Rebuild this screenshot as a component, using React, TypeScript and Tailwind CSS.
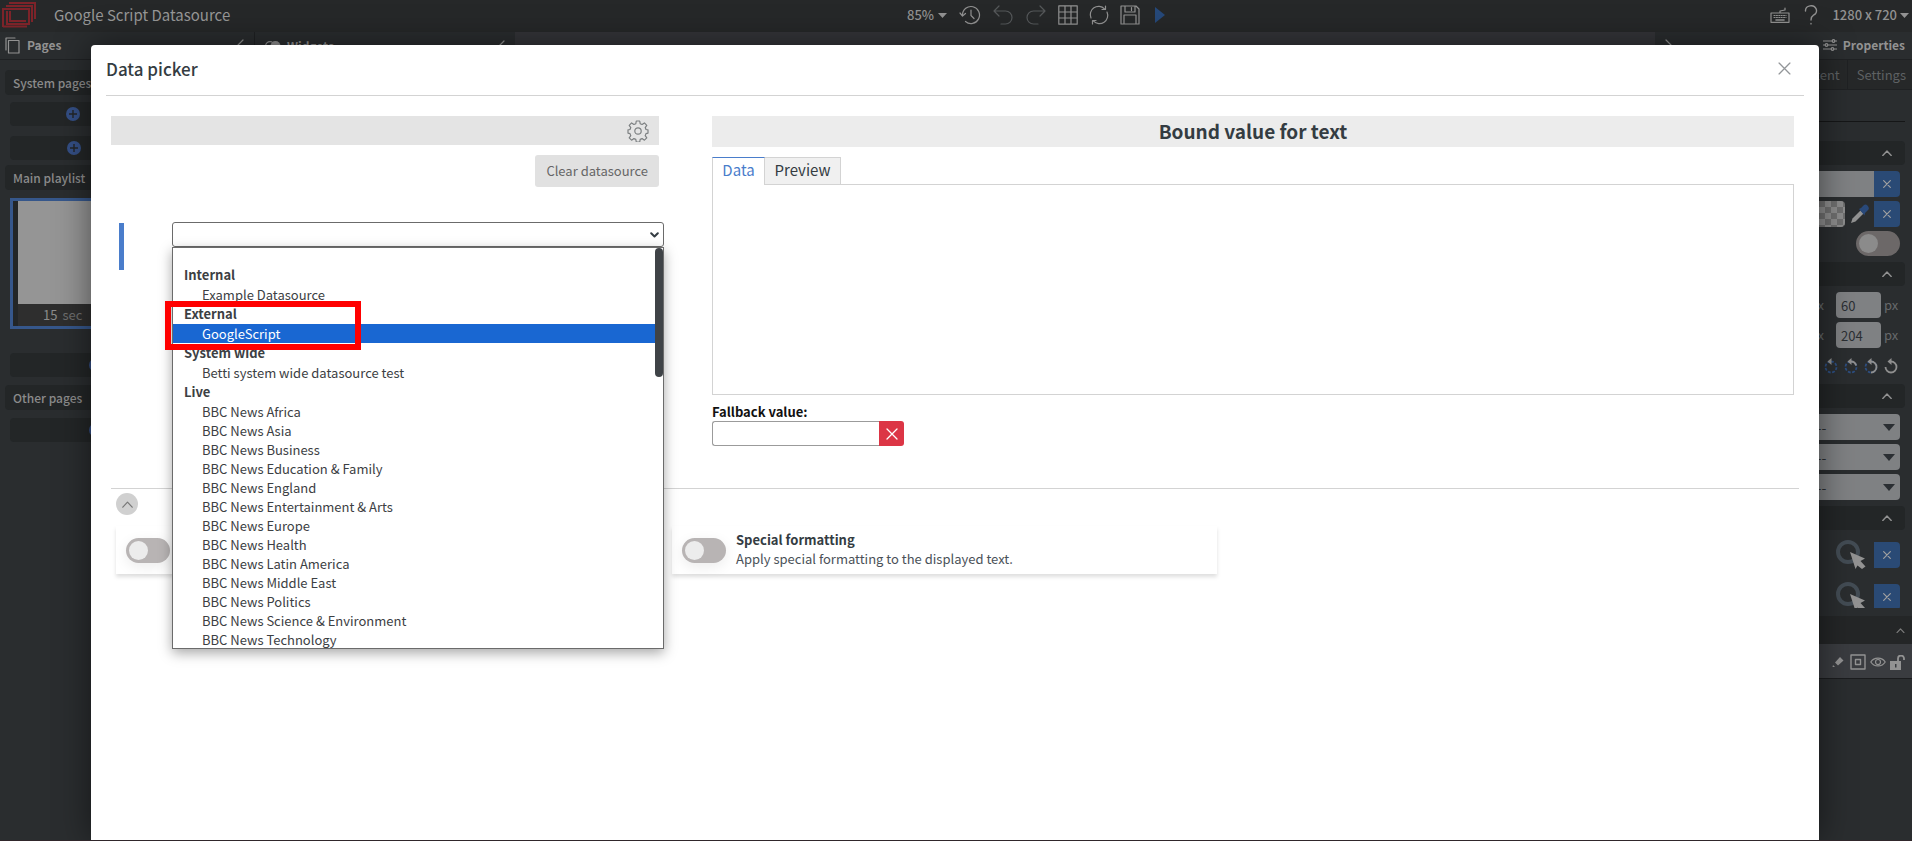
import React from "react";

type IconProps = { className?: string; children?: React.ReactNode; box?: string; sw?: number };

function Icon({ className = "size-5", children, box = "0 0 20 20", sw = 1.2 }: IconProps) {
  return (
    <svg
      className={`shrink-0 ${className}`}
      viewBox={box}
      fill="none"
      stroke="currentColor"
      strokeWidth={sw}
      strokeLinecap="round"
      strokeLinejoin="round"
      aria-hidden="true"
    >
      {children}
    </svg>
  );
}

const Cross = ({ className, sw }: { className: string; sw?: number }) => (
  <Icon className={className} box="0 0 12 12" sw={sw}>
    <path d="M1 1l10 10M11 1L1 11" />
  </Icon>
);

const Caret = ({ className }: { className: string }) => (
  <svg className={`shrink-0 ${className}`} viewBox="0 0 12 6" fill="currentColor" preserveAspectRatio="none" aria-hidden="true">
    <path d="M0 0h12L6 6z" />
  </svg>
);

function Logo() {
  return (
    <svg className="h-[26px] w-[34px] shrink-0" viewBox="0 0 34 26" fill="none" stroke="#7d2329" strokeWidth="2" aria-hidden="true">
      <path d="M7 1h26v16" />
      <path d="M4 4h26v16" />
      <path d="M1 25V7h26v15H5V9M1 24.500h24" />
      <path d="M8 9v10h16" />
    </svg>
  );
}

function TopBar() {
  return (
    <header className="grid h-8 grid-cols-[1fr_auto_1fr] items-center bg-[#262829] pb-[2px] text-[#929292]">
      <div className="flex items-center gap-[18px] pl-[2px]">
        <Logo />
        <h1 className="text-[15px] leading-5 text-[#979797]">Google Script Datasource</h1>
      </div>
      <div className="flex items-center gap-[11px] pl-40">
        <button className="flex items-center gap-1 text-[13px] font-medium leading-5">
          85% <Caret className="h-[5px] w-[9px]" />
        </button>
        <button aria-label="History" className="ml-px">
          <Icon className="size-[22px]" box="0 0 22 22">
            <path d="M3.500 11a8.500 8.500 0 1 1 3 6.500" />
            <path d="M1 9l2.500 3L6.500 9.500M12 6v5.500l3 3" />
          </Icon>
        </button>
        <button aria-label="Undo" className="text-[#55585a]">
          <Icon className="size-[22px]" box="0 0 22 22">
            <path d="M7 2L2 7l5 5M2 7h11.500a6 6 0 0 1 0 13H9" />
          </Icon>
        </button>
        <button aria-label="Redo" className="text-[#55585a]">
          <Icon className="size-[22px]" box="0 0 22 22">
            <path d="M15 2l5 5-5 5M20 7H8.500a6 6 0 0 0 0 13H13" />
          </Icon>
        </button>
        <button aria-label="Grid">
          <Icon className="size-5">
            <path d="M.8.800h18.400v18.400H.800zM7 1v18M13 1v18M1 7h18M1 13h18" />
          </Icon>
        </button>
        <button aria-label="Refresh">
          <Icon className="size-5">
            <path d="M2 13A8.300 8.300 0 0 1 15.500 3.800M18 7a8.300 8.300 0 0 1-13.500 9.200" />
            <path d="M16.500 1v3.500H13M3.500 19v-3.500H7" />
          </Icon>
        </button>
        <button aria-label="Save">
          <Icon className="size-5">
            <path d="M1 1h15l3 3v15H1zM5 1v6h10V1M11.500 2.500v3M4 19v-9h12v9" />
          </Icon>
        </button>
        <button aria-label="Play" className="ml-[3px] text-[#26497a]">
          <svg className="h-4 w-[11px]" viewBox="0 0 11 16" fill="currentColor" aria-hidden="true">
            <path d="M1 0l10 8-10 8z" />
          </svg>
        </button>
      </div>
      <div className="flex items-center justify-end gap-[14px] pr-[3px]">
        <button aria-label="Keyboard shortcuts">
          <Icon className="h-4 w-5" box="0 0 20 16">
            <path d="M1 6h18v9.300H1zM10 6V4l5-1V1" />
            <path d="M4 8.500h12M4 10.500h12" strokeDasharray="1 1.400" />
            <path d="M6 13h8" strokeWidth="1.600" />
          </Icon>
        </button>
        <button aria-label="Help">
          <Icon className="h-5 w-[14px]" box="0 0 14 20" sw={1.4}>
            <path d="M1.500 6a5.500 5 0 1 1 8 4.200C7.500 11.500 7 12.500 7 15M7 18.500v.4" />
          </Icon>
        </button>
        <button className="flex items-center gap-[3px] text-[13px] font-medium leading-5">
          1280 x 720 <Caret className="h-[5px] w-[9px]" />
        </button>
      </div>
    </header>
  );
}

const PanelChevron = ({ flip = false }: { flip?: boolean }) => (
  <Icon className="h-3 w-[7px] text-[#929292]" box="0 0 7 12">
    <path d={flip ? "M1 1l5 5-5 5" : "M6 1L1 6l5 5"} />
  </Icon>
);

const SideTitle = ({ children }: { children: React.ReactNode }) => (
  <h3 className="ml-[5px] rounded-l bg-[#232627] pl-2 text-[12px] font-medium leading-[25px] text-[#8b8b8b]">{children}</h3>
);

const AddButton = ({ pad }: { pad: string }) => (
  <button aria-label="Add page" className={`ml-[10px] flex h-6 items-center rounded-l bg-[#232627] ${pad}`}>
    <svg className="size-[14px]" viewBox="0 0 14 14" aria-hidden="true">
      <circle cx="7" cy="7" r="7" fill="#344f85" />
      <path d="M7 3v8M3 7h8" stroke="#232627" strokeWidth="1.400" />
    </svg>
  </button>
);

function PagesPanel() {
  return (
    <aside className="flex w-[255px] flex-col border-r border-[#1f2123] bg-[#2a2d2f]">
      <div className="flex h-7 items-center gap-[7px] border-b border-[#1f2123] pb-px pl-[5px] pr-[10px] text-[#929292]">
        <Icon className="h-[17px] w-[15px]" box="0 0 15 17">
          <path d="M3.500 3.500H14V16H3.500zM1 13V1h9" />
        </Icon>
        <h2 className="flex-1 text-[12px] font-bold leading-5">Pages</h2>
        <PanelChevron />
      </div>
      <div className="flex flex-col pt-[10px]">
        <SideTitle>System pages</SideTitle>
        <div className="mb-[5px] mt-[7px] flex flex-col gap-[10px]">
          <AddButton pad="pl-14" />
          <AddButton pad="pl-[57px]" />
        </div>
        <SideTitle>Main playlist</SideTitle>
        <div className="mb-6 ml-[10px] mt-2 border-[3px] border-r-0 border-[#36578b] bg-[#232627] pl-[5px]">
          <div className="h-[103px] bg-[#959595]" />
          <p className="bg-[#2e2e2e] pl-[25px] text-[13px] leading-[22px] text-[#6e6e6e]">
            <span className="mr-[5px] text-[#8b8b8b]">15</span>sec
          </p>
        </div>
        <AddButton pad="pl-[79px]" />
        <div className="my-2 flex flex-col">
          <SideTitle>Other pages</SideTitle>
        </div>
        <AddButton pad="pl-[79px]" />
      </div>
    </aside>
  );
}

function WidgetsPanel() {
  return (
    <aside className="w-[260px] bg-[#2a2d2f]">
      <div className="flex h-7 items-center gap-[6px] pb-px pl-[10px] pr-[10px] text-[#929292]">
        <svg className="h-3 w-4" viewBox="0 0 16 12" aria-hidden="true">
          <circle cx="5" cy="6" r="4.400" fill="none" stroke="currentColor" strokeWidth="1.200" />
          <circle cx="10.500" cy="6" r="5" fill="currentColor" />
        </svg>
        <h2 className="flex-1 text-[12px] font-bold leading-5">Widgets</h2>
        <PanelChevron />
      </div>
    </aside>
  );
}

const PropHeader = () => (
  <button aria-label="Collapse section" className="mr-[7px] flex h-6 items-center justify-end rounded bg-[#232627] pr-[13px] text-[#929292]">
    <Icon className="h-[6px] w-[10px]" box="0 0 10 6" sw={1.4}>
      <path d="M.8 5.500L5 1l4.200 4.500" />
    </Icon>
  </button>
);

const ResetButton = () => (
  <button aria-label="Reset" className="flex size-[26px] shrink-0 items-center justify-center rounded-r-sm bg-[#2a4a75] text-[#a0a0a0]">
    <Cross className="size-2" sw={1.8} />
  </button>
);

const Toggle = ({ label, look, id }: { label: string; look: string; id?: string }) => (
  <input
    type="checkbox"
    id={id}
    aria-label={label}
    className={`h-[25px] w-11 shrink-0 appearance-none rounded-full p-[3px] before:block before:size-[19px] before:rounded-full ${look}`}
  />
);

const NumberRow = ({ value, label }: { value: string; label: string }) => (
  <div className="flex h-[26px] items-center text-[13px] leading-5 text-[#66696b]">
    <span className="mr-3">px</span>
    <input
      aria-label={label}
      defaultValue={value}
      className="h-[26px] w-[45px] rounded-sm bg-[#7f8183] pl-[5px] pt-px text-[13px] text-[#2b2f33]"
    />
    <span className="ml-[3px] w-7">px</span>
  </div>
);

const rotations = [0, 1, 2, 3];

function RotateIcon({ level }: { level: number }) {
  const solid = ["", "M8 3.500a5.500 5.500 0 0 1 5.200 4", "M8 3.500a5.500 5.500 0 0 1 0 11", "M8 3.500a5.500 5.500 0 1 1-5.500 5.500"][level];
  return (
    <svg className="size-4" viewBox="0 0 16 16" fill="none" strokeWidth="1.800" aria-hidden="true">
      {level < 3 && <path d="M8 3.500a5.500 5.500 0 1 1-5.500 5.500A5.500 5.500 0 0 1 8 3.500" stroke="#2d4f82" strokeDasharray="2.800 1.500" />}
      {solid && <path d={solid} stroke="#8f8f8f" />}
      <path d="M8.500 0v7L4.500 3.500z" fill="#8f8f8f" />
    </svg>
  );
}

function PickTarget() {
  return (
    <svg className="size-[30px]" viewBox="0 0 30 30" aria-hidden="true">
      <circle cx="12" cy="12" r="10" fill="none" stroke="#434c54" strokeWidth="4" />
      <path d="M14 12l15 6.500-4.500 2.500 5 5.500-3.500 2.500-4.500-3.500-2 3.500z" fill="#929292" />
    </svg>
  );
}

function PropertiesPanel() {
  return (
    <aside className="flex w-[257px] flex-col bg-[#2a2d2f]">
      <div className="flex h-7 items-center border-b border-[#1f2123] pb-px pl-[10px] pr-[7px] text-[#929292]">
        <PanelChevron flip />
        <Icon className="ml-auto mr-[6px] h-3 w-[14px]" box="0 0 14 12">
          <path d="M0 2h9M12 2h2M0 6h2M5 6h9M0 10h8M11 10h3" />
          <circle cx="10.500" cy="2" r="1.300" />
          <circle cx="3.500" cy="6" r="1.300" />
          <circle cx="9.500" cy="10" r="1.300" />
        </Icon>
        <h2 className="text-[12px] font-bold leading-5">Properties</h2>
      </div>
      <nav className="flex h-[30px] justify-end border-b border-[#1f2123] bg-[#262829] text-[13px] leading-[30px] text-[#5e6163]">
        <a href="#content" className="border-r border-[#1f2123] pr-[7px]">Content</a>
        <a href="#settings" className="pl-[9px] pr-[6px]">Settings</a>
      </nav>
      <div className="h-[518px] shrink-0 overflow-hidden">
        <div className="flex flex-col pt-[31px]">
          <hr className="mb-[19px] mr-[7px] border-[#151617]" />
          <PropHeader />
          <div className="mt-[6px] flex flex-col items-end gap-1 pr-3">
            <div className="flex">
              <div className="h-[26px] w-[110px] bg-[#7f8183]" />
              <ResetButton />
            </div>
            <div className="flex items-center">
              <div className="h-[26px] w-[80px] rounded-r-sm bg-[#8d8d8d] bg-[repeating-conic-gradient(#707070_0_25%,#8d8d8d_0_50%)] bg-[length:12px_12px]" />
              <svg className="ml-[5px] mr-1 size-5" viewBox="0 0 20 20" aria-hidden="true">
                <path d="M1 19l1.500-4.500 8-8 3 3-8 8z" fill="#929292" />
                <path d="M9 5l2-1 3-3c2-2 6 2 4.500 4.500L15 9l-.5 2.500z" fill="#29497a" />
              </svg>
              <ResetButton />
            </div>
          </div>
          <div className="mb-[6px] mt-1 flex justify-end pr-3">
            <Toggle label="Shadow" look="bg-[#6c6868] before:bg-[#8b8b8b]" />
          </div>
          <PropHeader />
          <div className="my-[6px] flex flex-col items-end gap-1">
            <NumberRow label="Height" value="60" />
            <NumberRow label="Top" value="204" />
          </div>
          <div className="mb-[10px] mt-1 flex justify-end gap-1 pr-[13px]">
            {rotations.map((r) => (
              <button key={r} aria-label={`Rotate ${r * 90}`}>
                <RotateIcon level={r} />
              </button>
            ))}
          </div>
          <PropHeader />
          <div className="my-[6px] ml-3 mr-3 flex flex-col gap-1">
            {["Enter", "Idle", "Leave"].map((name) => (
              <div key={name} className="grid items-center">
                <select aria-label={name} className="col-start-1 row-start-1 h-[26px] appearance-none rounded-sm bg-[#7f8183] pl-[135px] text-[14px] text-[#2b2f33]">
                  <option>-----</option>
                </select>
                <Caret className="pointer-events-none col-start-1 row-start-1 mr-[5px] h-[7px] w-3 justify-self-end text-[#2b2f33]" />
              </div>
            ))}
          </div>
          <PropHeader />
          <div className="mt-[10px] flex flex-col gap-3 pr-3">
            {["click", "hover"].map((name) => (
              <div key={name} className="flex items-center justify-end gap-2">
                <PickTarget />
                <ResetButton />
              </div>
            ))}
          </div>
        </div>
      </div>
      <div className="mt-2 flex h-7 items-center justify-end bg-[#242627] pr-[7px] text-[#7d7d7d]">
        <Icon className="h-[5px] w-[9px]" box="0 0 10 6" sw={1.4}>
          <path d="M.8 5.500L5 1l4.200 4.500" />
        </Icon>
      </div>
      <div className="flex h-[35px] items-center justify-end gap-1 border-b border-[#1b1c1e] bg-[#3a3c40] pr-[7px] pt-[2px] text-[#929292]">
        <svg className="mr-[2px] size-3" viewBox="0 0 12 12" fill="currentColor" aria-hidden="true">
          <path d="M8 1l3.500 3.500-5.500 5-3-3zM1 9l2 2H.500z" />
        </svg>
        <Icon className="size-4" box="0 0 16 16" sw={1.4}>
          <path d="M1 1h14v14H1zM5.500 5.500h5v5h-5z" />
        </Icon>
        <Icon className="h-[10px] w-4" box="0 0 16 10">
          <path d="M.8 5C4-.2 12-.2 15.200 5 12 10.200 4 10.200.800 5z" />
          <circle cx="8" cy="5" r="2.500" />
        </Icon>
        <svg className="size-[15px]" viewBox="0 0 15 15" fill="none" aria-hidden="true">
          <path d="M0 6h11v9H0zM5 9v3.500h1.500V9z" fill="currentColor" fillRule="evenodd" />
          <path d="M8 6V3.500a3 3 0 0 1 6 0V5" stroke="currentColor" strokeWidth="1.800" />
        </svg>
      </div>
    </aside>
  );
}

const sources: { group: string; items: string[] }[] = [
  { group: "Internal", items: ["Example Datasource"] },
  { group: "External", items: ["GoogleScript"] },
  { group: "System wide", items: ["Betti system wide datasource test"] },
  {
    group: "Live",
    items: [
      "BBC News Africa",
      "BBC News Asia",
      "BBC News Business",
      "BBC News Education & Family",
      "BBC News England",
      "BBC News Entertainment & Arts",
      "BBC News Europe",
      "BBC News Health",
      "BBC News Latin America",
      "BBC News Middle East",
      "BBC News Politics",
      "BBC News Science & Environment",
      "BBC News Technology",
    ],
  },
];

function SourceList() {
  return (
    <div className="absolute inset-x-0 top-[25px] z-10 h-[402px] border border-[#6b6b6b] bg-white shadow-[0_4px_12px_rgba(0,0,0,0.35)]">
      <div role="listbox" aria-label="Datasources" className="h-full overflow-hidden pt-[17px] text-[13px] text-[#3c4043]">
        {sources.map(({ group, items }) => (
          <div key={group} role="group" aria-label={group}>
            <p className="pl-[11px] font-bold leading-5">{group}</p>
            {items.map((name) => (
              <div
                key={name}
                role="option"
                aria-selected={name === "GoogleScript"}
                className="pl-[29px] leading-[19px] aria-selected:bg-[#1967d2] aria-selected:text-white"
              >
                {name}
              </div>
            ))}
          </div>
        ))}
      </div>
      <div className="absolute right-0 top-0 h-[129px] w-2 rounded-full bg-[#3f4347]" />
      <div className="absolute -left-2 top-[53px] h-[49px] w-[196px] border-[6px] border-[#ff0000]" />
    </div>
  );
}

const FormatCard = ({ id, name, children }: { id: string; name: string; children?: React.ReactNode }) => (
  <div className="flex h-12 w-[545px] items-center gap-[10px] pl-[10px] shadow-[0_3px_4px_rgba(0,0,0,0.13)]">
    <Toggle id={id} label={name} look="bg-[#b8b4b4] before:bg-[#ececec] shadow-[0_4px_14px_rgba(0,0,0,0.08)]" />
    {children && (
      <label htmlFor={id} className="pb-[2px] text-[13px] leading-[19px] text-[#4a5158]">
        {children}
      </label>
    )}
  </div>
);

function DataPicker() {
  return (
    <section
      role="dialog"
      aria-label="Data picker"
      className="absolute inset-x-[91px] bottom-0 top-[45px] mr-[2px] overflow-hidden rounded-t bg-white text-[#343c42] shadow-[0_0_34px_rgba(0,0,0,0.5)]"
    >
      <div className="mx-[15px] flex h-[51px] items-center justify-between border-b border-[#d3d3d3] pb-[3px] pr-[13px]">
        <h2 className="text-[17px] font-medium leading-6">Data picker</h2>
        <button aria-label="Close" className="text-[#939699]">
          <Cross className="size-[13px]" sw={1.2} />
        </button>
      </div>

      <div className="mx-5 flex gap-[53px] pr-[5px] pt-5">
        <div className="w-[548px] shrink-0">
          <div className="flex h-[29px] items-center justify-end bg-[#e4e4e4] pr-[10px] text-[#7d8082]">
            <button aria-label="Datasource settings">
              <Icon className="size-[22px]" box="0 0 22 22">
                <circle cx="11" cy="11" r="3.200" />
                <path d="M9.300 1h3.400l.5 2.700 1.900.8 2.300-1.600 2.400 2.400-1.600 2.300.8 1.900 2 .400v3.200l-2 .5-.8 2 1.600 2.200-2.400 2.400-2.300-1.600-1.900.8-.5 2.600H9.300l-.5-2.600-1.900-.8-2.300 1.600-2.400-2.400 1.600-2.200-.8-2-2-.5V9.900l2-.4.800-1.900-1.600-2.300 2.400-2.400 2.300 1.600 1.900-.8z" />
              </Icon>
            </button>
          </div>
          <div className="mt-[10px] flex justify-end">
            <button className="h-8 rounded-[3px] bg-[#e1e1e1] px-[11px] text-[13px] leading-5 text-[#666666]">Clear datasource</button>
          </div>
          <div className="ml-2 mt-[35px] flex">
            <div className="mt-px h-[47px] w-[5px] shrink-0 bg-[#4a7dcb]" />
            <div className="relative ml-12 h-[25px] w-[492px] shrink-0">
              <div className="grid items-center">
                <select aria-label="Datasource" className="col-start-1 row-start-1 h-[25px] w-full appearance-none rounded-[3px] border border-[#6b6b6b] bg-white">
                  <option> </option>
                </select>
                <Icon className="pointer-events-none col-start-1 row-start-1 mr-[5px] h-[6px] w-[9px] justify-self-end" box="0 0 9 6" sw={2}>
                  <path d="M1.200 1.200l3.300 3.300 3.300-3.300" />
                </Icon>
              </div>
              <SourceList />
            </div>
          </div>
        </div>

        <div className="min-w-0 flex-1">
          <h3 className="h-[31px] bg-[#ececec] text-center text-[19px] font-bold leading-[29px]">Bound value for text</h3>
          <div role="tablist" className="mt-[10px] flex h-[27px] text-[15px] leading-6">
            <button role="tab" aria-selected="true" className="z-1 -mb-px w-[53px] border-x border-t border-x-[#d3d3d3] border-t-[#4a7dcb] bg-white pb-[3px] text-[#4a7dcb]">
              Data
            </button>
            <button role="tab" aria-selected="false" className="-ml-px w-[77px] border border-b-0 border-[#d3d3d3] bg-[#f0f0f0] pb-[2px]">
              Preview
            </button>
          </div>
          <div className="h-[211px] border border-[#d3d3d3]" />
          <label htmlFor="fallback" className="mt-2 block text-[13px] font-bold leading-[18px] text-[#111111]">
            Fallback value:
          </label>
          <div className="flex">
            <input id="fallback" className="h-[25px] w-[167px] rounded-l-[3px] border border-r-0 border-[#9b9b9b] px-2 text-[13px]" />
            <button aria-label="Clear fallback value" className="flex size-[25px] items-center justify-center rounded-r-[3px] bg-[#dc3545] text-white">
              <Cross className="size-3" sw={1.3} />
            </button>
          </div>
        </div>
      </div>

      <div className="mx-5 mt-[42px] border-t border-[#d3d3d3] pl-[5px]">
        <button aria-label="Collapse" className="mt-1 flex size-[22px] items-center justify-center rounded-full bg-[#d0d0d0] text-[#777777]">
          <Icon className="h-[7px] w-[11px]" box="0 0 11 7">
            <path d="M.8 6.200l4.700-5 4.700 5" />
          </Icon>
        </button>
        <div className="mt-[11px] flex gap-[11px]">
          <FormatCard id="conditional" name="Conditional formatting" />
          <FormatCard id="special" name="Special formatting">
            <b className="block text-[#343c42]">Special formatting</b>
            Apply special formatting to the displayed text.
          </FormatCard>
        </div>
      </div>
    </section>
  );
}

export default function App() {
  return (
    <div className="relative flex h-screen flex-col overflow-hidden border-b border-[#30272b] bg-[#343539] font-['Noto_Sans_CJK_SC','Noto_Sans',sans-serif]">
      <TopBar />
      <div className="flex min-h-0 flex-1">
        <PagesPanel />
        <WidgetsPanel />
        <main className="flex-1" />
        <PropertiesPanel />
      </div>
      <DataPicker />
    </div>
  );
}
